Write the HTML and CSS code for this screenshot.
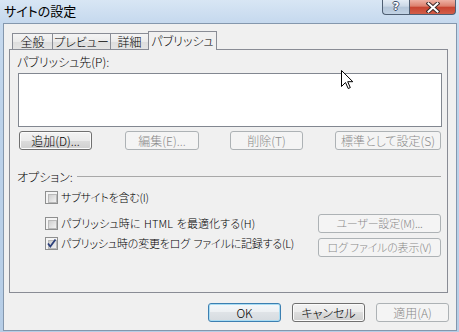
FILE: index.html
```html
<!DOCTYPE html>
<html lang="ja">
<head>
<meta charset="utf-8">
<title>サイトの設定</title>
<link rel="stylesheet" href="styles.css">
</head>
<body>
<div class="window">
  <div class="titlebar">
    <div class="title">サイトの設定</div>
    <div class="caps">
      <div class="cap help"><span class="q">?</span></div>
      <div class="cap close">
        <svg width="14" height="11" viewBox="0 0 14 11"><path d="M2.5 1.5 L11.5 9.5 M11.5 1.5 L2.5 9.5" stroke="#3a2a2a" stroke-width="4" stroke-linecap="square"/><path d="M2.5 1.5 L11.5 9.5 M11.5 1.5 L2.5 9.5" stroke="#ffffff" stroke-width="2" stroke-linecap="square"/></svg>
      </div>
    </div>
  </div>
  <div class="client">
    <div class="tabs">
      <div class="tab t1">全般</div>
      <div class="tab t2">プレビュー</div>
      <div class="tab t3">詳細</div>
      <div class="tab t4 selected">パブリッシュ</div>
    </div>
    <div class="panel">
      <div class="label">パブリッシュ先(P):</div>
      <div class="listbox"></div>
      <div class="btn-row">
        <button class="btn b-add">追加(D)...</button>
        <button class="btn b-edit disabled">編集(E)...</button>
        <button class="btn b-del disabled">削除(T)</button>
        <button class="btn b-std disabled">標準として設定(S)</button>
      </div>
      <div class="group-head"><span>オプション:</span><div class="rule"></div></div>
      <div class="options">
        <div class="opt r1"><span class="cb"></span><span class="opt-text">サブサイトを含む(I)</span></div>
        <div class="opt r2"><span class="cb"></span><span class="opt-text">パブリッシュ時に HTML を最適化する(H)</span></div>
        <button class="btn side s2 disabled">ユーザー設定(M)...</button>
        <div class="opt r3"><span class="cb checked"><svg class="tick" width="13" height="13" viewBox="0 0 13 13"><path d="M3 6.5 L5.3 9.5 L10.5 2.5" fill="none" stroke="#2b3f7a" stroke-width="1.8"/></svg></span><span class="opt-text">パブリッシュ時の変更をログ ファイルに記録する(L)</span></div>
        <button class="btn side s3 disabled">ログ ファイルの表示(V)</button>
      </div>
    </div>
    <div class="dialog-buttons">
      <button class="btn default">OK</button>
      <button class="btn">キャンセル</button>
      <button class="btn disabled">適用(A)</button>
    </div>
  </div>
  <svg class="cursor" width="13" height="20" viewBox="0 0 13 20"><path d="M0.5 0.5 L0.5 16.5 L4.5 12.5 L7.2 18.5 L9.3 17.6 L6.7 11.7 L11.8 11.7 Z" fill="#ffffff" stroke="#000000" stroke-width="1"/></svg>
</div>
</body>
</html>
```

FILE: styles.css
```css
* { box-sizing: border-box; }
html, body { margin: 0; padding: 0; }
body {
  width: 459px;
  height: 332px;
  overflow: hidden;
  font-family: "Noto Sans CJK JP", "Noto Sans", sans-serif;
  font-size: 12px;
  font-weight: 300;
  color: #000;
  font-feature-settings: "palt";
  background: #c2d6ec;
}
.window {
  position: relative;
  width: 459px;
  height: 332px;
  padding: 0 2px 1px 3px;
  background: linear-gradient(#d8e6f4, #c6d9ee 22px, #bcd2ea 120px, #b6cde6);
  display: flex;
  flex-direction: column;
}
.titlebar {
  height: 23px;
  display: flex;
  justify-content: space-between;
  align-items: flex-start;
}
.title {
  font-size: 13px;
  font-weight: 400;
  line-height: 22px;
  padding-left: 1px;
}
.caps { display: flex; margin-right: 1px; }
.cap {
  height: 15px;
  border: 1px solid #4f5f73;
  border-top: none;
  display: flex;
  align-items: center;
  justify-content: center;
}
.help {
  width: 27px;
  border-right: none;
  border-radius: 0 0 0 4px;
  background: linear-gradient(#e4ecf5, #cbd8e6 45%, #b4c5d8 50%, #c2d3e5);
}
.q {
  font-family: "DejaVu Sans", sans-serif;
  font-weight: bold;
  font-size: 11px;
  line-height: 12px;
  color: #fff;
  text-shadow: 1px 0 #40506a, -1px 0 #40506a, 0 1px #40506a, 0 -1px #40506a;
}
.close {
  width: 47px;
  border-radius: 0 0 4px 0;
  background: linear-gradient(#eeb1a4, #dc7f6c 45%, #c7432f 50%, #d25e49);
}
.close svg { display: block; }

.client {
  height: 308px;
  border: 1px solid #8497ad;
  background: #f0f0f0;
  display: flex;
  flex-direction: column;
}
.tabs {
  position: relative;
  z-index: 1;
  display: flex;
  align-items: flex-end;
  height: 25px;
  padding-left: 8px;
}
.tab {
  height: 16px;
  border: 1px solid #898c95;
  border-bottom: none;
  margin-left: -1px;
  background: linear-gradient(#f4f4f4, #ebebeb 50%, #dddddd 50%, #e4e4e4);
  text-align: center;
  line-height: 15px;
  white-space: nowrap;
}
.t1 { width: 41px; margin-left: 0; }
.t2 { width: 59px; }
.t3 { width: 39px; }
.t4 { width: 69px; }
.tab.selected {
  height: 19px;
  margin-bottom: -1px;
  background: #f0f0f0;
  line-height: 17px;
}
.panel {
  margin-left: 5px;
  width: 439px;
  height: 244px;
  border: 1px solid #898c95;
  background: #f0f0f0;
  padding: 0 5px 0 8px;
}
.label {
  margin-top: 4px;
  margin-left: -1px;
  line-height: 15px;
}
.listbox {
  margin-top: 4px;
  height: 54px;
  border: 1px solid #828790;
  background: #fff;
}
.btn {
  appearance: none;
  font: inherit;
  font-feature-settings: "palt";
  color: #000;
  height: 19px;
  padding: 0;
  line-height: 17px;
  text-align: center;
  white-space: nowrap;
  overflow: hidden;
  border: 1px solid #707070;
  border-radius: 3px;
  background: linear-gradient(#f3f3f3, #ebebeb 50%, #dddddd 50%, #cfcfcf);
  box-shadow: inset 0 0 0 1px #fbfbfb;
}
.btn.disabled {
  color: #8a8a8a;
  border-color: #adb2b5;
  background: #f4f4f4;
  box-shadow: none;
}
.btn.default {
  border-color: #3c7fb1;
  background: linear-gradient(#f4f8fb, #eceff2 50%, #dfe3e7 50%, #d6dbe0);
  box-shadow: inset 0 0 0 1px #a9dcf3;
}
.btn-row {
  display: flex;
  margin-top: 4px;
  margin-left: 1px;
}
.b-add { width: 73px; }
.b-edit { width: 74px; margin-left: 33px; }
.b-del { width: 73px; margin-left: 31px; }
.b-std { width: 106px; margin-left: 32px; }

.group-head {
  display: flex;
  align-items: center;
  margin-top: 19px;
  margin-left: -1px;
  line-height: 15px;
}
.rule {
  flex: 1;
  height: 1px;
  background: #a8a8a8;
  margin-left: 4px;
  margin-right: 1px;
}
.options {
  display: grid;
  grid-template-columns: 1fr 123px;
  grid-template-rows: 23px 23px 23px;
  margin-top: 7px;
  margin-right: 1px;
}
.opt {
  grid-column: 1;
  display: flex;
  align-items: center;
  height: 13px;
  margin-left: 27px;
  white-space: nowrap;
}
.r1 { grid-row: 1; }
.r2 { grid-row: 2; margin-top: 3px; }
.r3 { grid-row: 3; }
.side { grid-column: 2; width: 123px; font-size: 11px; letter-spacing: -0.2px; }
.s2 { grid-row: 2; }
.s3 { grid-row: 3; margin-top: 1px; }
.opt-text {
  margin-left: 3px;
  line-height: 15px;
  font-size: 11px;
  letter-spacing: -0.2px;
  word-spacing: 1px;
}
.r2 .opt-text { letter-spacing: 0.1px; }
.cb {
  position: relative;
  flex: none;
  width: 13px;
  height: 13px;
  border: 1px solid #8e8f8f;
  background: #f4f4f4;
  padding: 2px;
}
.cb::before {
  content: "";
  display: block;
  width: 7px;
  height: 7px;
  border: 1px solid #b9b9b9;
  background: linear-gradient(135deg, #cfcfcf, #f2f2f2);
}
.tick { position: absolute; left: -1px; top: -1px; }

.dialog-buttons {
  display: flex;
  justify-content: flex-end;
  gap: 11px;
  margin-top: 10px;
  padding-right: 7px;
}
.dialog-buttons .btn { width: 73px; }

.cursor { position: absolute; left: 341px; top: 70px; }
```
